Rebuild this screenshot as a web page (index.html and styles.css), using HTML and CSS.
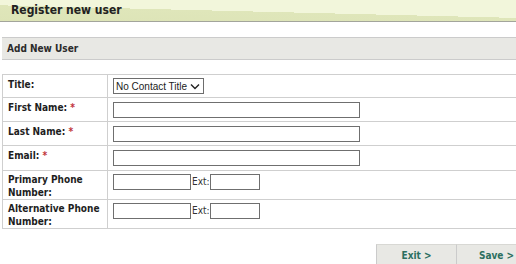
FILE: index.html
```html
<!DOCTYPE html>
<html lang="en">
<head>
    <meta charset="UTF-8">
    <meta name="viewport" content="width=device-width, initial-scale=1.0">
    <title>Register new user</title>
    <link rel="stylesheet" href="styles.css">
</head>
<body>
    <div class="page">
        <div class="page-header">
            <h1>Register new user</h1>
        </div>
        <div class="section-title">Add New User</div>
        <table class="form-table">
            <tr class="row-title">
                <th>Title:</th>
                <td>
                    <select class="title-select">
                        <option>No Contact Title</option>
                        <option>Mr</option>
                        <option>Mrs</option>
                        <option>Ms</option>
                    </select>
                </td>
            </tr>
            <tr>
                <th>First Name: <span class="req">*</span></th>
                <td><input type="text" class="field"></td>
            </tr>
            <tr>
                <th>Last Name: <span class="req">*</span></th>
                <td><input type="text" class="field"></td>
            </tr>
            <tr class="row-email">
                <th>Email: <span class="req">*</span></th>
                <td><input type="text" class="field"></td>
            </tr>
            <tr class="row-phone">
                <th>Primary Phone Number:</th>
                <td><input type="text" class="phone"><span class="ext">Ext:</span><input type="text" class="phone-ext"></td>
            </tr>
            <tr class="row-phone row-alt">
                <th>Alternative Phone Number:</th>
                <td><input type="text" class="phone"><span class="ext">Ext:</span><input type="text" class="phone-ext"></td>
            </tr>
        </table>
        <div class="actions">
            <button type="button" class="action">Exit &gt;</button>
            <button type="button" class="action">Save &gt;</button>
        </div>
    </div>
</body>
</html>
```

FILE: styles.css
```css
body {
    margin: 0;
    padding: 0;
    font-family: "DejaVu Sans Condensed", "DejaVu Sans", Tahoma, sans-serif;
    color: #222;
    background-color: #fff;
    overflow: hidden;
}
.page {
    width: 536px;
}
.page-header {
    height: 21px;
    border-bottom: 1px solid #a3a59c;
    background: linear-gradient(181.4deg, #f2f6db 0, #f2f6db 54%, #dfe6ba 54%, #dde4b7 100%);
}
.page-header h1 {
    margin: 0;
    padding-left: 11px;
    font-size: 12px;
    line-height: 21px;
    color: #222;
}
.section-title {
    margin: 15px 0 0 2px;
    height: 21px;
    line-height: 21px;
    padding-left: 5px;
    font-size: 10px;
    font-weight: bold;
    color: #2b2b2b;
    background-color: #e8e8e4;
    border-top: 1px solid #cbcbcb;
    border-bottom: 1px solid #cbcbcb;
}
.form-table {
    margin: 14px 0 0 2px;
    width: 534px;
    border-collapse: collapse;
}
.form-table th,
.form-table td {
    border: 1px solid #cfcfcf;
    vertical-align: top;
    padding: 3px 4px 2px 5px;
}
.form-table th {
    width: 95px;
    text-align: left;
    font-size: 10px;
    line-height: 13px;
    color: #1e1e1e;
}
.form-table tr {
    height: 24px;
}
.form-table .row-title {
    height: 23px;
}
.form-table .row-email {
    height: 25px;
}
.form-table .row-phone {
    height: 28px;
}
.form-table .row-alt {
    height: 29px;
}
.form-table .row-phone th {
    padding: 2px 4px 0 5px;
}
.req {
    color: #c0333a;
}
.title-select {
    display: block;
    height: 16px;
    width: 91px;
    margin: 0;
    padding: 0 0 0 2px;
    font-family: "Liberation Sans", Arial, sans-serif;
    font-size: 10px;
    color: #222;
    border: 1px solid #6d6d6d;
    border-radius: 0;
    background: #fff url("data:image/svg+xml,%3Csvg xmlns='http://www.w3.org/2000/svg' width='10' height='7' viewBox='0 0 10 7'%3E%3Cpath d='M1 1.5l4 4 4-4' fill='none' stroke='%23222' stroke-width='1.4'/%3E%3C/svg%3E") no-repeat right 3px center;
    appearance: none;
    -webkit-appearance: none;
}
input[type="text"] {
    height: 16px;
    margin: 0;
    padding: 0 2px;
    box-sizing: border-box;
    border: 1px solid #6f6f6f;
    border-radius: 0;
    background-color: #fff;
    font-size: 11px;
    vertical-align: top;
}
.field {
    display: block;
    width: 247px;
    margin-top: 1px !important;
}
.row-phone td {
    padding-top: 3px;
}
.phone {
    width: 78px;
    margin-right: 1px !important;
}
.phone-ext {
    width: 50px;
}
.ext {
    display: inline-block;
    font-size: 10px;
    line-height: 16px;
    color: #333;
    vertical-align: top;
}
.actions {
    display: flex;
    justify-content: flex-end;
    margin-top: 15px;
}
.action {
    width: 80px;
    height: 24px;
    padding: 0 0 2px;
    font-family: "DejaVu Sans Condensed", "DejaVu Sans", Tahoma, sans-serif;
    font-size: 10px;
    font-weight: bold;
    color: #2c6f60;
    background-color: #e8e8e4;
    border: none;
    border-left: 1px solid #cbcbcb;
    border-top: 1px solid #d8d8d4;
    cursor: pointer;
}
```
